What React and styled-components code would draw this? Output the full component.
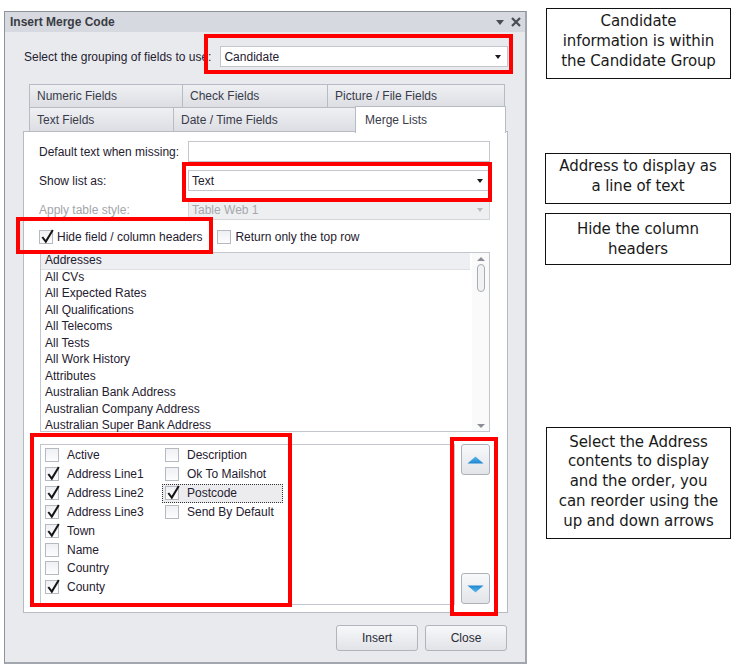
import React from 'react';
import styled, { createGlobalStyle } from 'styled-components';

const Global = createGlobalStyle`
  html, body { margin: 0; padding: 0; background: #fff; }
  body { font-family: "Liberation Sans", Arial, sans-serif; }
`;

const Page = styled.div`
  position: relative;
  width: 733px;
  height: 667px;
  display: flex;
  align-items: flex-start;
  overflow: hidden;
`;

const Dialog = styled.div`
  margin: 11px 0 0 4px;
  width: 523px;
  height: 653px;
  box-sizing: border-box;
  border: 1px solid #8e939b;
  border-right: 2px solid #a2a6ae;
  border-bottom: 2px solid #a2a6ae;
  background: #e9eaee;
  display: flex;
  flex-direction: column;
  font-size: 12px;
  color: #1f2030;
`;

const TitleBar = styled.div`
  height: 20px;
  flex: none;
  background: #d6d9df;
  display: flex;
  align-items: center;
  justify-content: space-between;
  padding: 0 4px 0 5px;
  font-weight: bold;
  font-size: 12px;
  color: #3a3c44;
`;

const TitleIcons = styled.div`
  display: flex;
  align-items: center;
  gap: 7px;
`;

const Body = styled.div`
  flex: 1;
  display: flex;
  flex-direction: column;
  padding: 0 17px 0 18px;
`;

const GroupRow = styled.div`
  margin-top: 14px;
  padding-left: 1px;
  display: flex;
  align-items: center;
  gap: 9px;
  height: 21px;
`;

const Label = styled.span`
  white-space: nowrap;
  color: ${p => (p.$disabled ? '#a2a5ab' : '#1f2030')};
`;

const Combo = styled.div`
  flex: 1;
  height: ${p => p.$h || 21}px;
  box-sizing: border-box;
  border: 1px solid ${p => (p.$disabled ? '#d3d5d9' : '#c3c6cc')};
  background: ${p => (p.$disabled ? '#eeeff1' : '#fff')};
  color: ${p => (p.$disabled ? '#a5a8ae' : '#1f2030')};
  display: flex;
  align-items: center;
  justify-content: space-between;
  padding: 0 6px 0 3px;
`;

const Arrow = styled.span`
  width: 0;
  height: 0;
  border-left: 3.5px solid transparent;
  border-right: 3.5px solid transparent;
  border-top: 4px solid ${p => (p.$disabled ? '#b9bcc2' : '#1a1a1a')};
`;

const Tabs = styled.div`
  margin-top: 17px;
  padding-left: 6px;
  display: flex;
  flex-direction: column;
`;

const TabRow = styled.div`
  display: flex;
  align-items: flex-start;
  height: ${p => p.$h}px;
  margin-top: ${p => p.$mt || 0}px;
`;

const Tab = styled.div`
  box-sizing: border-box;
  width: ${p => p.$w}px;
  height: ${p => (p.$active ? p.$h + 2 : p.$h)}px;
  margin-left: ${p => (p.$first ? 0 : -1)}px;
  margin-top: ${p => (p.$active ? -1 : 0)}px;
  border: 1px solid #b7bbc3;
  border-bottom: ${p => (p.$active ? 'none' : '1px solid #b7bbc3')};
  background: ${p => (p.$active ? '#fff' : 'linear-gradient(#eef0f3, #dcdee3)')};
  padding-left: ${p => (p.$active ? 9 : 7)}px;
  display: flex;
  align-items: center;
  color: #3a3b4a;
  position: relative;
  z-index: ${p => (p.$active ? 2 : 1)};
`;

const Panel = styled.div`
  margin-top: -1px;
  height: 482px;
  box-sizing: border-box;
  border: 1px solid #b7bbc3;
  background: #fff;
  padding: 9px 17px 0 15px;
  display: flex;
  flex-direction: column;
`;

const FormGrid = styled.div`
  display: grid;
  grid-template-columns: 149px 1fr;
  grid-auto-rows: 21px;
  row-gap: 8px;
  align-items: center;
`;

const TextBox = styled.div`
  height: 21px;
  box-sizing: border-box;
  border: 1px solid #c3c6cc;
  background: #fff;
`;

const CheckRow = styled.div`
  margin-top: 8px;
  height: 17px;
  display: flex;
  align-items: center;
  gap: 15px;
`;

const CheckItem = styled.label`
  display: flex;
  align-items: center;
  gap: ${p => p.$gap || 5}px;
  white-space: nowrap;
`;

const Box = styled.span`
  position: relative;
  flex: none;
  width: 14px;
  height: 14px;
  box-sizing: border-box;
  border: 1px solid #b5b9c0;
  background: linear-gradient(#eff0f3, #fdfdfe);
  svg { position: absolute; left: 0px; top: -3px; }
`;

const ListBox = styled.div`
  margin: 7px 0 0 1px;
  height: 180px;
  flex: none;
  box-sizing: border-box;
  border: 1px solid #c3c6cc;
  display: flex;
`;

const Items = styled.div`
  flex: 1;
  display: grid;
  grid-auto-rows: 16.5px;
  align-content: start;
`;

const Item = styled.div`
  box-sizing: border-box;
  line-height: 15px;
  padding-left: 4px;
  white-space: nowrap;
  background: ${p => (p.$selected ? '#eeeff2' : 'transparent')};
  border-bottom: ${p => (p.$selected ? '1px solid #dfe0e4' : 'none')};
  margin-right: ${p => (p.$selected ? 2 : 0)}px;
`;

const ScrollBar = styled.div`
  width: 17px;
  flex: none;
  display: flex;
  flex-direction: column;
  align-items: center;
  justify-content: space-between;
  padding: 4px 0 3px;
  box-sizing: border-box;
  background: #fafafb;
`;

const ScrollTop = styled.div`
  display: flex;
  flex-direction: column;
  align-items: center;
`;

const ScrollArrow = styled.span`
  width: 0;
  height: 0;
  border-left: 4px solid transparent;
  border-right: 4px solid transparent;
  ${p => (p.$up ? 'border-bottom: 4px solid #8b8e96;' : 'border-top: 4px solid #8b8e96;')}
`;

const Thumb = styled.div`
  width: 6px;
  height: 26px;
  border: 1px solid #a9acb3;
  border-radius: 4px;
  background: #f1f2f4;
  margin-top: 3px;
`;

const Lower = styled.div`
  margin: 12px 0 0 1px;
  height: 161px;
  flex: none;
  display: flex;
  gap: 6px;
`;

const CheckList = styled.div`
  width: 415px;
  box-sizing: border-box;
  border: 1px solid #c3c6cc;
  display: grid;
  grid-template-columns: 120px 1fr;
  grid-template-rows: repeat(8, 18.85px);
  padding: 1px 0 0 1px;
  align-content: start;
`;

const ListEntry = styled.div`
  grid-column: ${p => p.$col};
  grid-row: ${p => p.$row};
  display: flex;
  align-items: center;
  padding-left: 3px;
  box-sizing: border-box;
  ${p => (p.$focus ? 'border: 1px dotted #333; background: #ececef; padding-left: 2px; width: 121px;' : '')}
`;

const OrderButtons = styled.div`
  display: flex;
  flex-direction: column;
  justify-content: space-between;
  padding-bottom: 1px;
`;

const OrderBtn = styled.div`
  width: 29px;
  height: 31px;
  box-sizing: border-box;
  border: 1px solid #adb1b8;
  border-radius: 3px;
  background: linear-gradient(#f8f9fb, #e2e4e8);
  display: flex;
  align-items: center;
  justify-content: center;
`;

const Footer = styled.div`
  margin-top: 12px;
  padding-right: 1px;
  display: flex;
  justify-content: flex-end;
  gap: 7px;
`;

const Button = styled.div`
  width: 82px;
  height: 26px;
  box-sizing: border-box;
  border: 1px solid #b1b4bb;
  border-radius: 3px;
  background: linear-gradient(#f7f8fa, #e1e3e7);
  display: flex;
  align-items: center;
  justify-content: center;
  color: #2a2b38;
`;

const Notes = styled.div`
  margin-left: 18px;
  width: 186px;
  display: flex;
  flex-direction: column;
`;

const Note = styled.div`
  margin-top: ${p => p.$mt}px;
  margin-left: ${p => p.$ml || 0}px;
  height: ${p => p.$h}px;
  box-sizing: border-box;
  border: 1px solid #111;
  display: flex;
  align-items: center;
  justify-content: center;
  text-align: center;
  font-family: "DejaVu Sans", "Liberation Sans", sans-serif;
  font-size: 15px;
  letter-spacing: -0.1px;
  line-height: ${p => p.$lh || 20}px;
  color: #1a1a1a;
  padding-bottom: ${p => p.$pb || 0}px;
`;

const Highlight = styled.div`
  position: absolute;
  left: ${p => p.$x}px;
  top: ${p => p.$y}px;
  width: ${p => p.$w}px;
  height: ${p => p.$h}px;
  box-sizing: border-box;
  border: 4px solid #ff0000;
  pointer-events: none;
`;

const Check = () => (
  <svg width="15" height="16" viewBox="0 0 15 16">
    <path d="M2.3 9 L5.8 13.6 L12.8 2" fill="none" stroke="#151515" strokeWidth="2" strokeLinejoin="miter" />
  </svg>
);

const CheckBox = ({ checked }) => <Box>{checked && <Check />}</Box>;

const BlueTri = ({ up }) => (
  <svg width="17" height="8" viewBox="0 0 17 8">
    <defs>
      <linearGradient id={up ? 'gu' : 'gd'} x1="0" y1="0" x2="0" y2="1">
        <stop offset="0" stopColor={up ? '#58b6ee' : '#1f86cf'} />
        <stop offset="1" stopColor={up ? '#1f86cf' : '#5bb9ef'} />
      </linearGradient>
    </defs>
    <path d={up ? 'M0.5 7.5 L8.5 0.5 L16.5 7.5 Z' : 'M0.5 0.5 L16.5 0.5 L8.5 7.5 Z'} fill={`url(#${up ? 'gu' : 'gd'})`} />
  </svg>
);

const listItems = [
  'Addresses',
  'All CVs',
  'All Expected Rates',
  'All Qualifications',
  'All Telecoms',
  'All Tests',
  'All Work History',
  'Attributes',
  'Australian Bank Address',
  'Australian Company Address',
  'Australian Super Bank Address',
];

const col1 = [
  ['Active', false],
  ['Address Line1', true],
  ['Address Line2', true],
  ['Address Line3', true],
  ['Town', true],
  ['Name', false],
  ['Country', false],
  ['County', true],
];

const col2 = [
  ['Description', false],
  ['Ok To Mailshot', false],
  ['Postcode', true],
  ['Send By Default', false],
];

export default function App() {
  return (
    <Page>
      <Global />
      <Dialog>
        <TitleBar>
          <span>Insert Merge Code</span>
          <TitleIcons>
            <svg width="8" height="5" viewBox="0 0 8 5"><path d="M0 0 H8 L4 5 Z" fill="#4a4c52" /></svg>
            <svg width="10" height="10" viewBox="0 0 10 10"><path d="M1 1 L9 9 M9 1 L1 9" stroke="#4a4c52" strokeWidth="2.2" /></svg>
          </TitleIcons>
        </TitleBar>
        <Body>
          <GroupRow>
            <Label>Select the grouping of fields to use:</Label>
            <Combo>
              <span>Candidate</span>
              <Arrow />
            </Combo>
          </GroupRow>
          <Tabs>
            <TabRow $h={24}>
              <Tab $first $w={154} $h={24}>Numeric Fields</Tab>
              <Tab $w={146} $h={24}>Check Fields</Tab>
              <Tab $w={178} $h={24}>Picture / File Fields</Tab>
            </TabRow>
            <TabRow $h={25} $mt={-1}>
              <Tab $first $w={145} $h={25}>Text Fields</Tab>
              <Tab $w={183} $h={25}>Date / Time Fields</Tab>
              <Tab $active $w={151} $h={25}>Merge Lists</Tab>
            </TabRow>
          </Tabs>
          <Panel>
            <FormGrid>
              <Label>Default text when missing:</Label>
              <TextBox />
              <Label>Show list as:</Label>
              <Combo>
                <span>Text</span>
                <Arrow />
              </Combo>
              <Label $disabled>Apply table style:</Label>
              <Combo $disabled $h={20}>
                <span>Table Web 1</span>
                <Arrow $disabled />
              </Combo>
            </FormGrid>
            <CheckRow>
              <CheckItem $gap={4}>
                <CheckBox checked />
                <span>Hide field / column headers</span>
              </CheckItem>
              <CheckItem $gap={4}>
                <CheckBox />
                <span>Return only the top row</span>
              </CheckItem>
            </CheckRow>
            <ListBox>
              <Items>
                {listItems.map((t, i) => (
                  <Item key={t} $selected={i === 0}>{t}</Item>
                ))}
              </Items>
              <ScrollBar>
                <ScrollTop>
                  <ScrollArrow $up />
                  <Thumb />
                </ScrollTop>
                <ScrollArrow />
              </ScrollBar>
            </ListBox>
            <Lower>
              <CheckList>
                {col1.map(([t, c], i) => (
                  <ListEntry key={t} $col={1} $row={i + 1}>
                    <CheckItem $gap={8}>
                      <CheckBox checked={c} />
                      <span>{t}</span>
                    </CheckItem>
                  </ListEntry>
                ))}
                {col2.map(([t, c], i) => (
                  <ListEntry key={t} $col={2} $row={i + 1} $focus={t === 'Postcode'}>
                    <CheckItem $gap={8}>
                      <CheckBox checked={c} />
                      <span>{t}</span>
                    </CheckItem>
                  </ListEntry>
                ))}
              </CheckList>
              <OrderButtons>
                <OrderBtn><BlueTri up /></OrderBtn>
                <OrderBtn><BlueTri /></OrderBtn>
              </OrderButtons>
            </Lower>
          </Panel>
          <Footer>
            <Button>Insert</Button>
            <Button>Close</Button>
          </Footer>
        </Body>
      </Dialog>
      <Notes>
        <Note $mt={8} $ml={1} $h={71} $pb={6}>Candidate<br />information is within<br />the Candidate Group</Note>
        <Note $mt={74} $h={51} $pb={5}>Address to display as<br />a line of text</Note>
        <Note $mt={9} $h={52} $pb={1}>Hide the column<br />headers</Note>
        <Note $mt={162} $ml={1} $h={112} $lh={19.7} $pb={2}>Select the Address<br />contents to display<br />and the order, you<br />can reorder using the<br />up and down arrows</Note>
      </Notes>
      <Highlight $x={204} $y={34} $w={309} $h={40} />
      <Highlight $x={182} $y={162} $w={310} $h={40} />
      <Highlight $x={16} $y={217} $w={197} $h={37} />
      <Highlight $x={30} $y={433} $w={262} $h={174} />
      <Highlight $x={450} $y={437} $w={48} $h={179} />
    </Page>
  );
}
